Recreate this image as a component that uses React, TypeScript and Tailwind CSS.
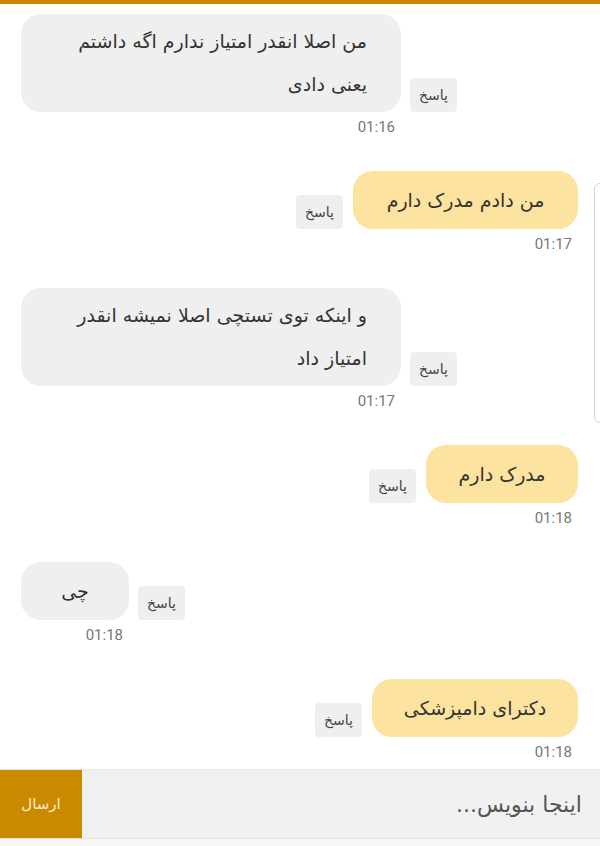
import React from "react";

type Msg = {
  side: "in" | "out";
  lines: string[];
  time: string;
  width: number;
};

const messages: Msg[] = [
  { side: "in", lines: ["من اصلا انقدر امتیاز ندارم اگه داشتم", "یعنی دادی"], time: "01:16", width: 380 },
  { side: "out", lines: ["من دادم مدرک دارم"], time: "01:17", width: 225 },
  { side: "in", lines: ["و اینکه توی تستچی اصلا نمیشه انقدر", "امتیاز داد"], time: "01:17", width: 380 },
  { side: "out", lines: ["مدرک دارم"], time: "01:18", width: 152 },
  { side: "in", lines: ["چی"], time: "01:18", width: 108 },
  { side: "out", lines: ["دکترای دامپزشکی"], time: "01:18", width: 206 },
];

const font = { fontFamily: '"DejaVu Sans", "Noto Sans", sans-serif' };

const ReplyButton = () => (
  <button
    dir="rtl"
    className="h-[34px] w-[47px] shrink-0 rounded-[4px] bg-[#efefef] text-[14px] text-[#444]"
    style={font}
  >
    پاسخ
  </button>
);

const Bubble = ({ msg }: { msg: Msg }) => {
  const multi = msg.lines.length > 1;
  const color = msg.side === "in" ? "bg-[#efefef]" : "bg-[#fde3a0]";
  if (multi) {
    return (
      <div
        dir="rtl"
        className={`${color} rounded-[20px] py-[6px] pr-[34px] text-[19px] leading-[43px] text-[#333]`}
        style={{ ...font, width: msg.width }}
      >
        {msg.lines.map((l) => (
          <div key={l}>{l}</div>
        ))}
      </div>
    );
  }
  return (
    <div
      dir="rtl"
      className={`${color} flex h-[58px] items-center justify-center rounded-[20px] text-[19px] text-[#333]`}
      style={{ ...font, width: msg.width }}
    >
      {msg.lines[0]}
    </div>
  );
};

const Message = ({ msg }: { msg: Msg }) => {
  if (msg.side === "in") {
    return (
      <div className="flex flex-col items-start pl-[21px]">
        <div className="flex items-end gap-[9px]">
          <Bubble msg={msg} />
          <ReplyButton />
        </div>
        <div
          className="mt-[7px] pr-[6px] text-right text-[15px] leading-[16px] text-[#777]"
          style={{ width: msg.width, fontFamily: "Roboto, sans-serif" }}
        >
          {msg.time}
        </div>
      </div>
    );
  }
  return (
    <div className="flex flex-col items-end pr-[22px]">
      <div className="flex items-end gap-[10px]">
        <ReplyButton />
        <Bubble msg={msg} />
      </div>
      <div
        className="mt-[7px] pr-[6px] text-[15px] leading-[16px] text-[#777]"
        style={{ fontFamily: "Roboto, sans-serif" }}
      >
        {msg.time}
      </div>
    </div>
  );
};

export default function App() {
  return (
    <div className="relative flex h-[846px] w-[600px] flex-col overflow-hidden bg-white">
      <div className="h-[4px] bg-[#c98a00]" />
      {/* edge of a card peeking in from the right */}
      <div className="absolute left-[594px] top-[183px] h-[240px] w-[20px] rounded-[6px] border border-[#d4d4d4]" />
      <div className="flex flex-1 flex-col gap-[36px] pt-[10px]">
        {messages.map((m, i) => (
          <Message key={i} msg={m} />
        ))}
      </div>
      <div className="flex h-[69px] border-t border-[#e6e6e6] bg-[#f1f1f1]">
        <button
          className="flex w-[82px] items-center justify-center bg-[#c98a00] text-[15px] text-[#fdf0cc]"
          style={font}
        >
          ارسال
        </button>
        <div
          dir="rtl"
          className="flex flex-1 items-center pr-[18px] text-[22px] text-[#555]"
          style={font}
        >
          اینجا بنویس...
        </div>
      </div>
      <div className="h-[8px] border-t border-[#e2e2e2] bg-[#f7f7f7]" />
    </div>
  );
}
